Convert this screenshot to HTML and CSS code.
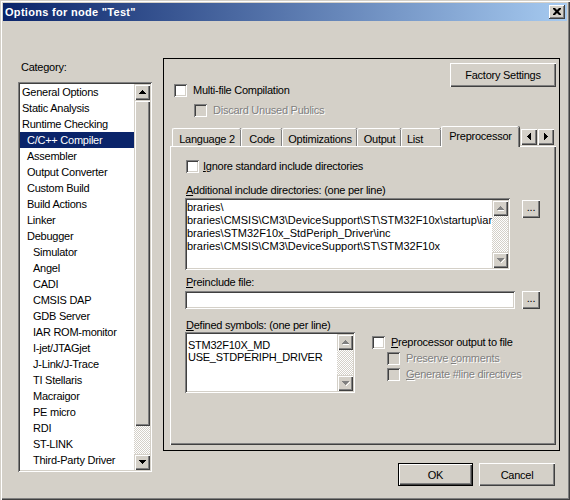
FILE: index.html
```html
<!DOCTYPE html>
<html>
<head>
<meta charset="utf-8">
<title>Options for node "Test"</title>
<link rel="stylesheet" href="styles.css">
</head>
<body>
<div class="window">
  <div class="titlebar">
    <span class="title">Options for node "Test"</span>
    <div class="close"><svg width="16" height="14" viewBox="0 0 16 14"><path d="M4 3h2l2 2 2-2h2v1l-2.5 2.5L12 9v1h-2L8 8l-2 2H4V9l2.5-2.5L4 4z" fill="#000"/></svg></div>
  </div>
  <div class="main">
    <div class="left">
      <div class="cat-label">Category:</div>
      <div class="listbox">
        <div class="items">
          <div class="item l0">General Options</div>
          <div class="item l0">Static Analysis</div>
          <div class="item l0">Runtime Checking</div>
          <div class="item l1 sel">C/C++ Compiler</div>
          <div class="item l1">Assembler</div>
          <div class="item l1">Output Converter</div>
          <div class="item l1">Custom Build</div>
          <div class="item l1">Build Actions</div>
          <div class="item l1">Linker</div>
          <div class="item l1">Debugger</div>
          <div class="item l2">Simulator</div>
          <div class="item l2">Angel</div>
          <div class="item l2">CADI</div>
          <div class="item l2">CMSIS DAP</div>
          <div class="item l2">GDB Server</div>
          <div class="item l2">IAR ROM-monitor</div>
          <div class="item l2">I-jet/JTAGjet</div>
          <div class="item l2">J-Link/J-Trace</div>
          <div class="item l2">TI Stellaris</div>
          <div class="item l2">Macraigor</div>
          <div class="item l2">PE micro</div>
          <div class="item l2">RDI</div>
          <div class="item l2">ST-LINK</div>
          <div class="item l2">Third-Party Driver</div>
        </div>
        <div class="vscroll">
          <div class="sbtn"><svg width="7" height="4" viewBox="0 0 7 4"><path d="M3 0h1v1h1v1h1v1h1v1H0V3h1V2h1V1h1z" fill="#000"/></svg></div>
          <div class="thumb"></div>
          <div class="track"></div>
          <div class="sbtn"><svg width="7" height="4" viewBox="0 0 7 4"><path d="M0 0h7v1H6v1H5v1H4v1H3V3H2V2H1V1H0z" fill="#000"/></svg></div>
        </div>
      </div>
    </div>
    <div class="right">
      <div class="frame">
        <div class="top">
          <div class="checks">
            <div class="check"><span class="box"></span><span class="lbl">Multi-file Compilation</span></div>
            <div class="check sub disabled"><span class="box"></span><span class="lbl">Discard Unused Publics</span></div>
          </div>
          <div class="btn factory">Factory Settings</div>
        </div>
        <div class="tabs">
          <div class="tab w-lang">Language 2</div>
          <div class="tab w-code">Code</div>
          <div class="tab w-opt">Optimizations</div>
          <div class="tab w-out">Output</div>
          <div class="tab w-list">List</div>
          <div class="tab sel w-pre">Preprocessor</div>
          <div class="spin">
            <div class="spbtn"><svg width="4" height="7" viewBox="0 0 4 7"><path d="M3 0h1v7H3V6H2V5H1V4H0V3h1V2h1V1h1z" fill="#000"/></svg></div>
            <div class="spbtn"><svg width="4" height="7" viewBox="0 0 4 7"><path d="M0 0h1v1h1v1h1v1h1v1H3v1H2v1H1v1H0z" fill="#000"/></svg></div>
          </div>
        </div>
        <div class="pane">
          <div class="check ignore"><span class="box"></span><span class="lbl"><u>I</u>gnore standard include directories</span></div>
          <div class="label add-label"><u>A</u>dditional include directories: (one per line)</div>
          <div class="row">
            <div class="field multi inc">
              <div class="text">braries\
braries\CMSIS\CM3\DeviceSupport\ST\STM32F10x\startup\iar<span class="caret"></span>
braries\STM32F10x_StdPeriph_Driver\inc
braries\CMSIS\CM3\DeviceSupport\ST\STM32F10x</div>
              <div class="vscroll dis">
                <div class="sbtn"><svg width="7" height="5" viewBox="0 0 7 5"><path d="M3 0h1v1h1v1h1v1h1v1H0V3h1V2h1V1h1z" fill="#808080"/><path d="M1 4h7v1H1z" fill="#fff"/></svg></div>
                <div class="track"></div>
                <div class="sbtn"><svg width="8" height="5" viewBox="0 0 8 5"><path d="M0 0h7v1H6v1H5v1H4v1H3V3H2V2H1V1H0z" fill="#808080"/><path d="M7 1h1v1H7zM6 2h1v1H6zM5 3h1v1H5zM4 4h1v1H4z" fill="#fff"/></svg></div>
              </div>
            </div>
            <div class="btn dots dots-inc">...</div>
          </div>
          <div class="label pre-label"><u>P</u>reinclude file:</div>
          <div class="row">
            <div class="field single"></div>
            <div class="btn dots dots-pre">...</div>
          </div>
          <div class="label def-label"><u>D</u>efined symbols: (one per line)</div>
          <div class="row">
            <div class="field multi def">
              <div class="text">STM32F10X_MD
USE_STDPERIPH_DRIVER</div>
              <div class="vscroll dis">
                <div class="sbtn"><svg width="7" height="5" viewBox="0 0 7 5"><path d="M3 0h1v1h1v1h1v1h1v1H0V3h1V2h1V1h1z" fill="#808080"/><path d="M1 4h7v1H1z" fill="#fff"/></svg></div>
                <div class="track"></div>
                <div class="sbtn"><svg width="8" height="5" viewBox="0 0 8 5"><path d="M0 0h7v1H6v1H5v1H4v1H3V3H2V2H1V1H0z" fill="#808080"/><path d="M7 1h1v1H7zM6 2h1v1H6zM5 3h1v1H5zM4 4h1v1H4z" fill="#fff"/></svg></div>
              </div>
            </div>
            <div class="ppgroup">
              <div class="check"><span class="box"></span><span class="lbl"><u>P</u>reprocessor output to file</span></div>
              <div class="check sub2 disabled"><span class="box"></span><span class="lbl">Preserve <u>c</u>omments</span></div>
              <div class="check sub2 disabled"><span class="box"></span><span class="lbl"><u>G</u>enerate #line directives</span></div>
            </div>
          </div>
        </div>
      </div>
      <div class="buttons">
        <div class="btn default ok">OK</div>
        <div class="btn cancel">Cancel</div>
      </div>
    </div>
  </div>
</div>
</body>
</html>
```
FILE: styles.css
```css
* { box-sizing: border-box; }
html, body { margin: 0; padding: 0; }
body {
  width: 570px; height: 500px; overflow: hidden;
  background: #d4d0c8;
  font-family: "Liberation Sans", Arial, sans-serif;
  font-size: 11px; color: #000; letter-spacing: -0.25px;
}
u { text-decoration: underline; text-underline-offset: 1px; }

.window {
  width: 570px; height: 500px; padding: 3px;
  background: #d4d0c8;
  box-shadow: inset 1px 1px #d4d0c8, inset 2px 2px #fff, inset -1px -1px #404040, inset -2px -2px #808080;
}
.titlebar {
  height: 18px; display: flex; align-items: center;
  padding: 0 2px 0 2px;
  background: linear-gradient(90deg, #0a246a, #a6caf0);
}
.title { flex: 1; color: #fff; font-weight: bold; font-size: 11px; letter-spacing: 0.3px; }
.close {
  width: 16px; height: 14px; background: #d4d0c8; display: flex;
  box-shadow: inset -1px -1px #404040, inset 1px 1px #fff, inset -2px -2px #808080;
}
.close svg { display: block; }

.main { display: flex; }
.left { margin-left: 15px; width: 134px; }
.cat-label { margin-top: 40px; height: 13px; line-height: 13px; padding-left: 3px; }
.listbox {
  margin-top: 8px; height: 390px; width: 134px; padding: 2px;
  display: flex; background: #fff;
  box-shadow: inset 1px 1px #808080, inset -1px -1px #fff, inset 2px 2px #404040, inset -2px -2px #d4d0c8;
}
.items { flex: 1; overflow: hidden; }
.item { height: 16px; line-height: 16px; white-space: nowrap; }
.item.l0 { padding-left: 2px; }
.item.l1 { padding-left: 7px; }
.item.l2 { padding-left: 13px; }
.item.sel { background: #0a246a; color: #fff; }

.vscroll { width: 16px; display: flex; flex-direction: column; flex: none; }
.sbtn {
  width: 16px; height: 16px; flex: none; background: #d4d0c8;
  display: flex; align-items: center; justify-content: center;
  box-shadow: inset 1px 1px #d4d0c8, inset 2px 2px #fff, inset -1px -1px #404040, inset -2px -2px #808080;
}
.sbtn svg { display: block; }
.thumb {
  height: 326px; flex: none; background: #d4d0c8;
  box-shadow: inset 1px 1px #d4d0c8, inset 2px 2px #fff, inset -1px -1px #404040, inset -2px -2px #808080;
}
.track {
  flex: 1;
  background: repeating-conic-gradient(#fff 0 25%, #d4d0c8 0 50%) 0 0 / 2px 2px;
}

.right { margin-left: 11px; }
.frame {
  margin-top: 37px; width: 397px; height: 393px;
  border: 1px solid #000;
}
.top { height: 67px; display: flex; align-items: flex-start; }
.checks { padding-left: 10px; padding-top: 25px; }
.check { display: flex; align-items: center; height: 13px; white-space: nowrap; }
.checks .check { margin-bottom: 7px; }
.check .box {
  width: 13px; height: 13px; flex: none; background: #fff;
  box-shadow: inset 1px 1px #808080, inset -1px -1px #fff, inset 2px 2px #404040, inset -2px -2px #d4d0c8;
}
.check .lbl { margin-left: 6px; line-height: 13px; }
.check.sub { margin-left: 20px; }
.check.disabled .box { background: #d4d0c8; }
.check.disabled .lbl { color: #808080; text-shadow: 1px 1px 0 #fff; }

.btn {
  background: #d4d0c8; display: flex; align-items: center; justify-content: center;
  box-shadow: inset 1px 1px #fff, inset -1px -1px #404040, inset -2px -2px #808080;
  white-space: nowrap; flex: none;
}
.factory { margin-left: auto; margin-right: 3px; margin-top: 4px; width: 106px; height: 24px; }

.tabs { height: 20px; display: flex; align-items: flex-end; padding-left: 8px; position: relative; z-index: 1; }
.tab {
  height: 18px; line-height: 16px; text-align: center; padding-top: 2px;
  border-top: 1px solid #fff; border-left: 1px solid #fff;
  border-top-left-radius: 2px; border-top-right-radius: 2px;
  box-shadow: inset -1px 0 #808080, 1px 0 #404040;
  white-space: nowrap; background: #d4d0c8;
}
.w-lang { width: 69px; }
.w-code { width: 41px; }
.w-opt { width: 75px; }
.w-out { width: 44px; }
.w-list { width: 40px; text-align: left; padding-left: 5px; }
.w-pre { width: 78px; }
.tab.sel { height: 21px; margin-bottom: -1px; padding-top: 1px; line-height: 16px; }
.spin { display: flex; align-self: flex-start; margin-top: 2px; margin-left: 1px; }
.spbtn {
  width: 17px; height: 17px; background: #d4d0c8;
  display: flex; align-items: center; justify-content: center;
  box-shadow: inset 1px 1px #d4d0c8, inset 2px 2px #fff, inset -1px -1px #404040, inset -2px -2px #808080;
}
.spbtn svg { display: block; }

.pane {
  margin-left: 6px; width: 386px; height: 299px;
  padding: 14px 0 0 15px;
  box-shadow: inset 1px 1px #fff, inset -1px -1px #404040, inset -2px -2px #808080;
}
.check.ignore { margin-left: 1px; }
.check.ignore .lbl { margin-left: 4px; }
.label { height: 13px; line-height: 13px; padding-left: 1px; white-space: nowrap; }
.add-label { margin-top: 11px; }
.row { display: flex; align-items: flex-start; }
.field {
  background: #fff; padding: 2px;
  box-shadow: inset 1px 1px #808080, inset -1px -1px #fff, inset 2px 2px #404040, inset -2px -2px #d4d0c8;
}
.field.multi { display: flex; }
.field .text { flex: 1; overflow: hidden; white-space: pre; line-height: 13px; padding-top: 1px; padding-left: 0; }
.inc { margin-top: 1px; width: 325px; height: 72px; }
.inc .text { letter-spacing: 0; }
.def { width: 170px; height: 61px; }
.def .text { padding-left: 1px; padding-top: 5px; line-height: 12px; }
.caret { display: inline-block; width: 1px; height: 13px; background: #000; vertical-align: top; }
.vscroll.dis .sbtn svg { margin-left: 1px; }
.dots { width: 18px; height: 18px; line-height: 1; padding-bottom: 3px; }
.dots-inc { margin-left: 12px; margin-top: 3px; }
.pre-label { margin-top: 6px; }
.single { margin-top: 2px; width: 330px; height: 18px; }
.dots-pre { margin-left: 7px; margin-top: 2px; }
.def-label { margin-top: 10px; }
.ppgroup { margin-left: 17px; margin-top: 4px; }
.ppgroup .check { margin-bottom: 3px; }
.ppgroup .check .lbl { margin-left: 6px; }
.check.sub2 { margin-left: 15px; }

.buttons { display: flex; justify-content: flex-end; gap: 6px; margin-top: 12px; padding-right: 5px; }
.ok { width: 75px; height: 23px; }
.cancel { width: 76px; height: 23px; }
.btn.default {
  box-shadow: inset 0 0 0 1px #000, inset 2px 2px #fff, inset -2px -2px #404040, inset -3px -3px #808080;
}
```
